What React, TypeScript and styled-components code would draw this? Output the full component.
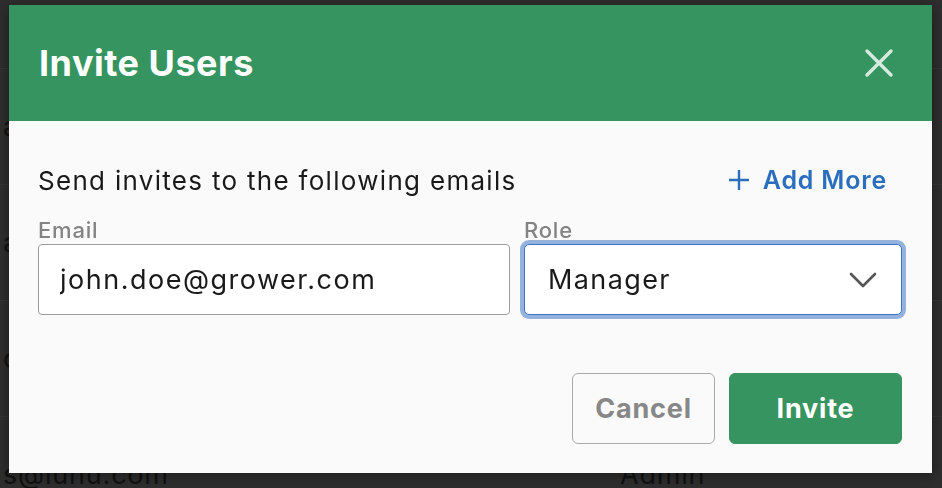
import styled, { createGlobalStyle } from "styled-components";

const GlobalStyle = createGlobalStyle`
  html, body {
    margin: 0;
    padding: 0;
    background: #2e2e2e;
    overflow: hidden;
  }
  body {
    font-family: Inter, "Liberation Sans", sans-serif;
  }
`;

const users = [
  { email: "anna@lunu.com", role: "Manager" },
  { email: "andrea@lunu.com", role: "Admin" },
  { email: "ops@lunu.com", role: "Viewer" },
  { email: "s@lunu.com", role: "Admin" },
];

const App = () => {
  return (
    <>
      <GlobalStyle />
      <Page>
        <Row first />
        {users.map((u) => (
          <Row key={u.email}>
            <EmailCell>{u.email}</EmailCell>
            <RoleCell>{u.role}</RoleCell>
          </Row>
        ))}
      </Page>

      <Modal role="dialog" aria-labelledby="invite-title">
        <Header>
          <Title id="invite-title">Invite Users</Title>
          <CloseButton aria-label="Close">
            <svg width="30" height="30" viewBox="0 0 30 30">
              <path
                d="M3 3 L27 27 M27 3 L3 27"
                stroke="currentColor"
                strokeWidth="3.4"
                strokeLinecap="round"
              />
            </svg>
          </CloseButton>
        </Header>

        <Body>
          <IntroRow>
            <Intro>Send invites to the following emails</Intro>
            <AddMore>
              <svg width="22" height="22" viewBox="0 0 22 22">
                <path
                  d="M11 1 V21 M1 11 H21"
                  stroke="currentColor"
                  strokeWidth="2.4"
                />
              </svg>
              Add More
            </AddMore>
          </IntroRow>

          <Fields>
            <Field>
              <Label>Email</Label>
              <TextInput defaultValue="john.doe@grower.com" />
            </Field>
            <Field>
              <Label>Role</Label>
              <Select focused>
                <span>Manager</span>
                <svg width="28" height="16" viewBox="0 0 28 16">
                  <path
                    d="M2 2 L14 14 L26 2"
                    fill="none"
                    stroke="#555"
                    strokeWidth="2.6"
                    strokeLinecap="round"
                    strokeLinejoin="round"
                  />
                </svg>
              </Select>
            </Field>
          </Fields>

          <Footer>
            <Button>Cancel</Button>
            <Button primary>Invite</Button>
          </Footer>
        </Body>
      </Modal>
    </>
  );
};

const Page = styled.div`
  display: flex;
  flex-direction: column;
  width: 100vw;
  height: 100vh;
  overflow: hidden;
`;

const Row = styled.div<{ first?: boolean }>`
  flex: 0 0 ${({ first }) => (first ? "68px" : "115px")};
  display: flex;
  align-items: center;
  border-bottom: 1px solid #363636;
  font-size: 27px;
  letter-spacing: 0.8px;
  color: #111;
`;

const EmailCell = styled.div`
  width: 617px;
  padding-left: 3px;
`;

const RoleCell = styled.div`
  flex: 1;
`;

const Modal = styled.div`
  position: fixed;
  top: 5px;
  left: 9px;
  width: 923px;
  height: 468px;
  background: #fafafa;
  display: flex;
  flex-direction: column;
  box-shadow: 0 2px 12px rgba(0, 0, 0, 0.4);
`;

const Header = styled.div`
  height: 116px;
  flex: 0 0 116px;
  background: #35945f;
  display: flex;
  align-items: center;
  justify-content: space-between;
  padding: 0 38px 0 30px;
  box-sizing: border-box;
`;

const Title = styled.h1`
  margin: 0;
  color: #fff;
  font-size: 36px;
  font-weight: 700;
  letter-spacing: 0.5px;
`;

const CloseButton = styled.button`
  border: 0;
  background: none;
  padding: 0;
  color: rgba(255, 255, 255, 0.8);
  display: flex;
  cursor: pointer;
`;

const Body = styled.div`
  flex: 1;
  display: flex;
  flex-direction: column;
  padding: 44px 30px 29px 29px;
  box-sizing: border-box;
`;

const IntroRow = styled.div`
  display: flex;
  align-items: center;
  justify-content: space-between;
  height: 30px;
  padding-right: 15px;
`;

const Intro = styled.p`
  margin: 0;
  font-size: 26px;
  letter-spacing: 1.3px;
  color: #1a1a1a;
`;

const AddMore = styled.button`
  border: 0;
  background: none;
  padding: 0;
  display: flex;
  align-items: center;
  gap: 13px;
  font-family: inherit;
  font-size: 25px;
  font-weight: 600;
  letter-spacing: 0.8px;
  color: #2a6ebd;
  cursor: pointer;
`;

const Fields = styled.div`
  display: grid;
  grid-template-columns: 472px 1fr;
  column-gap: 14px;
  margin-top: 22px;
`;

const Field = styled.label`
  display: flex;
  flex-direction: column;
`;

const Label = styled.span`
  height: 27px;
  font-size: 22px;
  font-weight: 500;
  letter-spacing: 0.8px;
  color: #838383;
  line-height: 26px;
  overflow: hidden;
`;

const TextInput = styled.input`
  height: 71px;
  box-sizing: border-box;
  border: 1px solid #9d9d9d;
  border-radius: 4px;
  background: #fff;
  padding: 0 21px;
  font-family: inherit;
  font-size: 27px;
  letter-spacing: 1.5px;
  color: #1a1a1a;
  outline: none;
`;

const Select = styled.div<{ focused?: boolean }>`
  height: 71px;
  box-sizing: border-box;
  border: 1px solid ${({ focused }) => (focused ? "#3b76c5" : "#9d9d9d")};
  border-radius: 5px;
  background: #fff;
  padding: 0 24px 0 23px;
  display: flex;
  align-items: center;
  justify-content: space-between;
  font-size: 27px;
  letter-spacing: 1.4px;
  color: #1a1a1a;
  box-shadow: ${({ focused }) =>
    focused ? "0 0 0 4px rgba(80, 130, 200, 0.6)" : "none"};
`;

const Footer = styled.div`
  margin-top: auto;
  display: flex;
  justify-content: flex-end;
  gap: 14px;
`;

const Button = styled.button<{ primary?: boolean }>`
  height: 71px;
  min-width: ${({ primary }) => (primary ? "173px" : "143px")};
  box-sizing: border-box;
  border-radius: 6px;
  border: 1px solid ${({ primary }) => (primary ? "#35945f" : "#a9a9a9")};
  background: ${({ primary }) => (primary ? "#35945f" : "#fafafa")};
  color: ${({ primary }) => (primary ? "#fff" : "#878787")};
  font-family: inherit;
  font-size: 27px;
  font-weight: 700;
  letter-spacing: 0.8px;
  cursor: pointer;
`;

export default App;
